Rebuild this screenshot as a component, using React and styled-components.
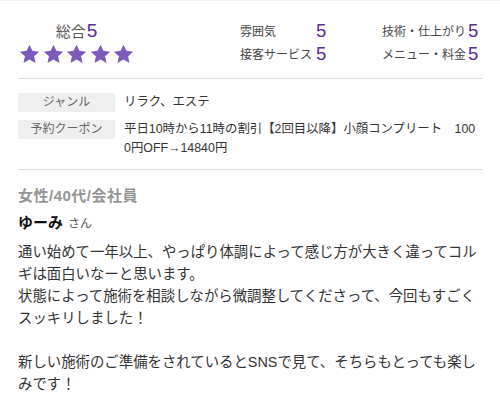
import React from 'react';
import styled, { createGlobalStyle } from 'styled-components';

const Global = createGlobalStyle`
  html, body {
    margin: 0;
    background: #fff;
  }
  body {
    font-family: "Liberation Sans", "Noto Sans CJK JP", sans-serif;
    color: #333;
  }
`;

const Page = styled.div`
  width: 500px;
  border-top: 1px solid #f0f0f0;
  box-sizing: border-box;
  padding: 0 18px;
`;

const Summary = styled.section`
  display: flex;
  padding: 18px 0 13px;
  border-bottom: 1px solid #dcdcdc;
`;

const Overall = styled.div`
  width: 117px;
  display: flex;
  flex-direction: column;
  align-items: center;
`;

const OverallTitle = styled.div`
  height: 23px;
  display: flex;
  align-items: center;
  font-size: 15px;
  color: #555;
`;

const Score = styled.span`
  color: #5a2b98;
  font-size: ${p => (p.big ? '19px' : '18.5px')};
  margin-left: ${p => (p.big ? '1px' : '0')};
`;

const Stars = styled.div`
  display: flex;
  gap: 2.5px;
  height: 23px;
  align-items: center;
`;

const Ratings = styled.div`
  margin-left: auto;
  display: grid;
  grid-template-columns: 76px 66px 86px 14px;
  grid-auto-rows: 23px;
  align-items: center;
`;

const RatingLabel = styled.span`
  font-size: 12px;
  color: #444;
  white-space: nowrap;
`;

const Info = styled.section`
  padding: 14px 0 11px;
  border-bottom: 1px solid #dcdcdc;
  display: flex;
  flex-direction: column;
  gap: 8px;
`;

const InfoRow = styled.div`
  display: flex;
  align-items: flex-start;
  gap: 9px;
`;

const InfoLabel = styled.div`
  flex: 0 0 97px;
  height: 19px;
  line-height: 19px;
  background: #efefef;
  color: #666;
  font-size: 12px;
  text-align: center;
`;

const InfoValue = styled.div`
  flex: 1;
  font-size: 12.4px;
  line-height: 19px;
  color: #333;
  word-break: break-all;
`;

const Review = styled.section`
  padding-top: 15px;
`;

const Profile = styled.div`
  font-size: 15px;
  line-height: 22px;
  font-weight: 700;
  letter-spacing: 0.5px;
  color: #959595;
`;

const Name = styled.div`
  margin-top: 5px;
  line-height: 22px;
  font-size: 15px;
  font-weight: 700;
  color: #111;
`;

const Honorific = styled.span`
  font-size: 12px;
  font-weight: 400;
  color: #555;
  margin-left: 5px;
`;

const Body = styled.p`
  margin: 6px 0 0;
  width: 464px;
  font-size: 14.4px;
  line-height: 22px;
  color: #333;
  white-space: pre-line;
`;

const Star = () => (
  <svg width="21" height="20" viewBox="0 0 24 23">
    <path
      d="M12 0.8l3.3 7.1 7.8 0.9-5.8 5.3 1.6 7.7L12 17.9l-6.9 3.9 1.6-7.7L0.9 8.8l7.8-0.9z"
      fill="#7d5bbd"
    />
  </svg>
);

const ratings = [
  ['雰囲気', 5],
  ['技術・仕上がり', 5],
  ['接客サービス', 5],
  ['メニュー・料金', 5],
];

const text = `通い始めて一年以上、やっぱり体調によって感じ方が大きく違ってコルギは面白いなーと思います。
状態によって施術を相談しながら微調整してくださって、今回もすごくスッキリしました！

新しい施術のご準備をされているとSNSで見て、そちらもとっても楽しみです！`;

export default function App() {
  return (
    <Page>
      <Global />
      <Summary>
        <Overall>
          <OverallTitle>
            総合<Score big>5</Score>
          </OverallTitle>
          <Stars>
            {[0, 1, 2, 3, 4].map(i => (
              <Star key={i} />
            ))}
          </Stars>
        </Overall>
        <Ratings>
          {ratings.map(([label, value]) => (
            <React.Fragment key={label}>
              <RatingLabel>{label}</RatingLabel>
              <Score>{value}</Score>
            </React.Fragment>
          ))}
        </Ratings>
      </Summary>

      <Info>
        <InfoRow>
          <InfoLabel>ジャンル</InfoLabel>
          <InfoValue>リラク、エステ</InfoValue>
        </InfoRow>
        <InfoRow>
          <InfoLabel>予約クーポン</InfoLabel>
          <InfoValue>
            平日10時から11時の割引【2回目以降】小顔コンプリート　1000円OFF→14840円
          </InfoValue>
        </InfoRow>
      </Info>

      <Review>
        <Profile>女性/40代/会社員</Profile>
        <Name>
          ゆーみ<Honorific>さん</Honorific>
        </Name>
        <Body>{text}</Body>
      </Review>
    </Page>
  );
}
